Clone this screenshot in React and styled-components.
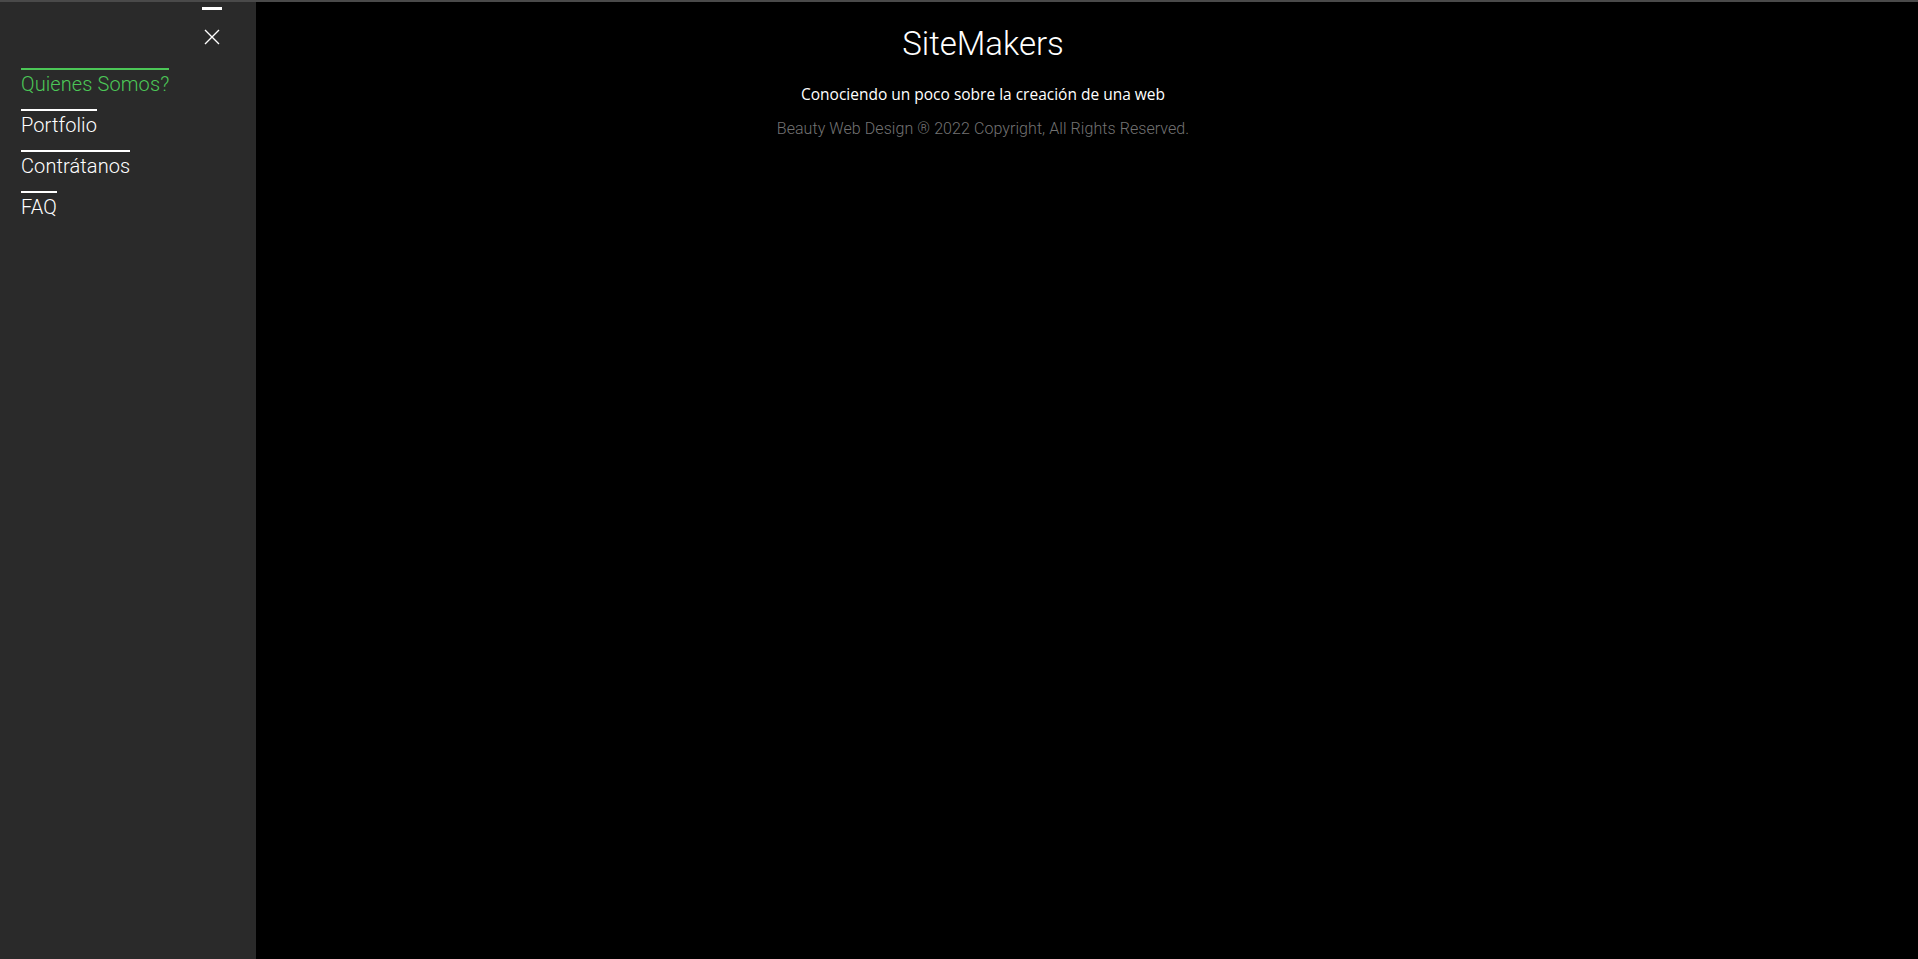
import React from 'react'
import styled, { createGlobalStyle } from 'styled-components'

const GlobalStyle = createGlobalStyle`
    html, body {
        margin: 0;
        padding: 0;
        background: #000000;
        height: 100%;
    }
    body {
        font-family: Roboto, "Liberation Sans", sans-serif;
        border-top: 2px solid #4a4a4a;
        box-sizing: border-box;
    }
`

const Page = styled.div`
    min-height: 957px;
    background: #000000;
`

const Drawer = styled.aside`
    position: fixed;
    top: 2px;
    left: 0;
    bottom: 0;
    width: 256px;
    background: #2a2a2a;
    display: flex;
    flex-direction: column;
`

const DrawerTop = styled.div`
    display: flex;
    flex-direction: column;
    align-items: flex-end;
    padding: 5px 34px 0 0;
`

const Handle = styled.span`
    display: block;
    width: 20px;
    height: 3px;
    background: #ffffff;
`

const CloseBtn = styled.button`
    margin-top: 18px;
    margin-right: 1px;
    width: 18px;
    height: 18px;
    padding: 0;
    border: none;
    background: none;
    cursor: pointer;
    outline: none;
    svg {
        display: block;
    }
`

const Menu = styled.nav`
    display: flex;
    flex-direction: column;
    align-items: flex-start;
    gap: 10px;
    padding: 22px 0 0 21px;
`

const MenuLink = styled.a`
    display: inline-block;
    border-top: 2px solid ${p => (p.$active ? '#4cc757' : '#ffffff')};
    color: ${p => (p.$active ? '#4cc757' : '#ffffff')};
    font-family: Roboto, "Liberation Sans", sans-serif;
    font-weight: 300;
    font-size: 20px;
    line-height: 29px;
    letter-spacing: 0.1px;
    text-decoration: none;
    cursor: pointer;
`

const Content = styled.main`
    display: flex;
    flex-direction: column;
    align-items: center;
    padding: 19px 0 0 48px;
    text-align: center;
`

const Title = styled.h1`
    margin: 0;
    font-family: Roboto, "Liberation Sans", sans-serif;
    font-weight: 300;
    font-size: 33px;
    line-height: 46px;
    color: #ffffff;
`

const Subtitle = styled.p`
    margin: 16px 0 0;
    font-family: "Open Sans", sans-serif;
    font-size: 15.5px;
    line-height: 22px;
    color: #ffffff;
`

const Copy = styled.p`
    margin: 13px 0 0;
    font-family: Roboto, "Liberation Sans", sans-serif;
    font-weight: 300;
    font-size: 16px;
    letter-spacing: 0.07px;
    line-height: 22px;
    color: #737373;
`

const items = ['Quienes Somos?', 'Portfolio', 'Contrátanos', 'FAQ']

const App = () => {
    return (
        <>
            <GlobalStyle />
            <Page>
                <Content>
                    <Title>SiteMakers</Title>
                    <Subtitle>Conociendo un poco sobre la creación de una web</Subtitle>
                    <Copy>Beauty Web Design ® 2022 Copyright, All Rights Reserved.</Copy>
                </Content>
                <Drawer>
                    <DrawerTop>
                        <Handle />
                        <CloseBtn aria-label="close">
                            <svg width="18" height="18" viewBox="0 0 18 18">
                                <path d="M2 2 L16 16 M16 2 L2 16" stroke="#ffffff" strokeWidth="1.4" fill="none" />
                            </svg>
                        </CloseBtn>
                    </DrawerTop>
                    <Menu>
                        {items.map((item, i) => (
                            <MenuLink key={item} $active={i === 0}>{item}</MenuLink>
                        ))}
                    </Menu>
                </Drawer>
            </Page>
        </>
    )
}

export default App
